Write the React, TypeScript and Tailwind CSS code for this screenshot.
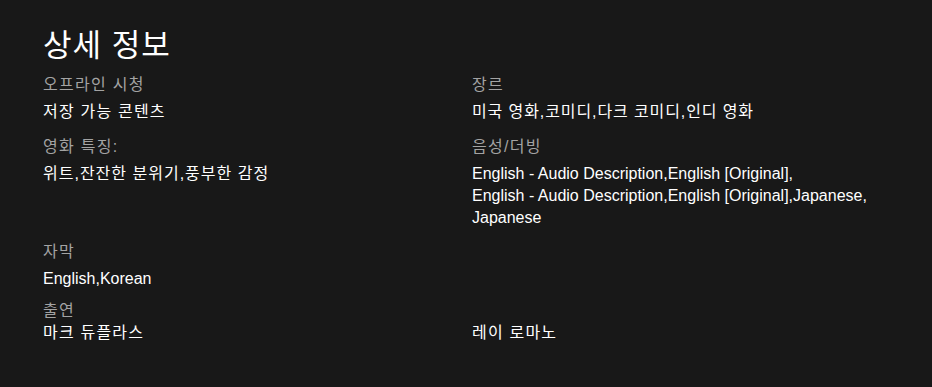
const font = { fontFamily: '"Liberation Sans", "Noto Sans CJK KR", sans-serif' };

type Item = { label: string; value: string[]; track?: string; gap?: string };

const items: Item[] = [
  { label: "오프라인 시청", value: ["저장 가능 콘텐츠"], track: "tracking-[1.2px]" },
  { label: "장르", value: ["미국 영화,코미디,다크 코미디,인디 영화"], track: "tracking-[0.9px]" },
  { label: "영화 특징:", value: ["위트,잔잔한 분위기,풍부한 감정"], track: "tracking-[1px]" },
  {
    label: "음성/더빙",
    value: [
      "English - Audio Description,English [Original],",
      "English - Audio Description,English [Original],Japanese,",
      "Japanese",
    ],
    gap: "mb-[12px]",
  },
  { label: "자막", value: ["English,Korean"], gap: "mb-[10px]" },
];

const Label = ({ children }: { children: string }) => (
  <div className="text-[16px] leading-[22px] tracking-[1.3px] text-[#a3a3a3]">{children}</div>
);

const InfoCell = ({ label, value, track = "", gap = "mb-[13px]" }: Item) => (
  <div className={gap}>
    <Label>{label}</Label>
    <div className={`mt-[5px] text-[16px] leading-[22px] text-white ${track}`}>
      {value.map((v) => (
        <div key={v}>{v}</div>
      ))}
    </div>
  </div>
);

export default function App() {
  return (
    <div className="min-h-screen bg-[#181818] px-[43px] pt-[24px]" style={font}>
      <h2 className="text-[31px] leading-[44px] tracking-[1px] text-white">상세 정보</h2>
      <div className="mt-[6px] grid w-[858px] grid-cols-2">
        {items.map((it) => (
          <InfoCell key={it.label} {...it} />
        ))}
        <div />
      </div>
      <Label>출연</Label>
      <div className="grid w-[858px] grid-cols-2 text-[16px] leading-[22px] tracking-[1.2px] text-white">
        <div>마크 듀플라스</div>
        <div>레이 로마노</div>
      </div>
    </div>
  );
}
